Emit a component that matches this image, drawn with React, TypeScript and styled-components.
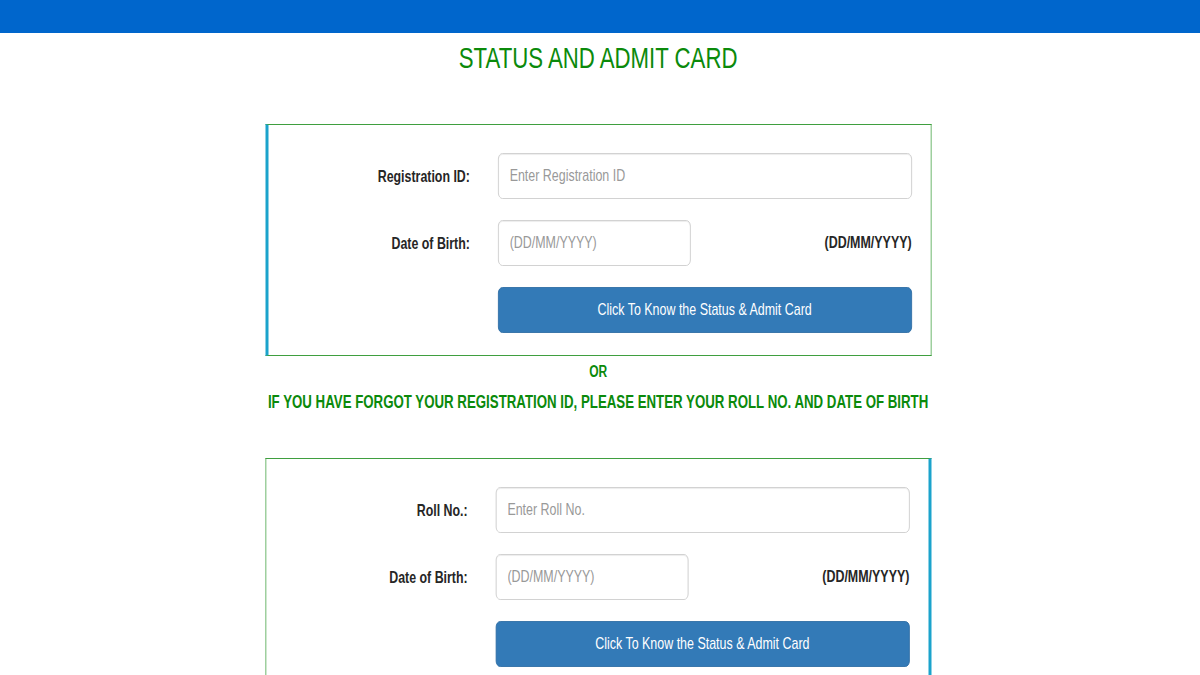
import React from "react";
import styled, { createGlobalStyle } from "styled-components";

const GlobalStyle = createGlobalStyle`
  html, body {
    margin: 0;
    padding: 0;
    overflow: hidden;
    background: #ffffff;
  }
  body {
    font-family: "Liberation Sans", Arial, sans-serif;
    color: #333333;
  }
  * {
    box-sizing: border-box;
  }
`;

const TopBar = styled.header`
  height: 33px;
  background: #0066cc;
`;

// the capture is squeezed horizontally, so the page is laid out wide and condensed
const Page = styled.main`
  width: 1595px;
  transform: scaleX(0.75);
  transform-origin: 0 0;
  display: flex;
  flex-direction: column;
  align-items: center;
`;

const Title = styled.h2`
  margin: 9px 0 50px;
  font-size: 29.6px;
  line-height: 32px;
  font-weight: normal;
  color: #0b8a0b;
`;

interface IPanelProps {
  $accent: "left" | "right";
}

const Panel = styled.section<IPanelProps>`
  width: 888px;
  border: 1px solid #3f9f3f;
  border-${({ $accent }) => $accent}: 4px solid #1ba3cc;
  padding: 28px 25px 22px 0;
  display: grid;
  grid-template-columns: 268px 552px;
  justify-content: end;
  column-gap: 37px;
  row-gap: 21px;
  align-items: center;
`;

const Label = styled.label`
  text-align: right;
  font-size: 16.5px;
  font-weight: bold;
  color: #262626;
`;

interface IInputProps {
  $width?: string;
}

const Input = styled.input<IInputProps>`
  width: ${({ $width = "100%" }) => $width};
  height: 46px;
  padding: 10px 15px;
  font-family: inherit;
  font-size: 16.6px;
  color: #555555;
  background: #ffffff;
  border: 1px solid #cccccc;
  border-radius: 6px;
  box-shadow: inset 0 1px 1px rgba(0, 0, 0, 0.075);
  outline: none;

  &::placeholder {
    color: #999999;
  }
`;

const DateCell = styled.div`
  display: flex;
  align-items: center;
  justify-content: space-between;
`;

const Hint = styled.span`
  font-size: 16.6px;
  font-weight: bold;
  color: #262626;
`;

const SubmitButton = styled.button`
  grid-column: 2;
  height: 46px;
  font-family: inherit;
  font-size: 16.6px;
  color: #ffffff;
  background: #337ab7;
  border: 1px solid #2e6da4;
  border-radius: 6px;
  cursor: pointer;
`;

const Or = styled.p`
  margin: 6px 0 0;
  font-size: 16px;
  line-height: 20px;
  font-weight: bold;
  color: #0b8a0b;
`;

const Note = styled.p`
  margin: 9px 0 45px;
  font-size: 17.7px;
  line-height: 22px;
  font-weight: bold;
  white-space: nowrap;
  color: #0b8a0b;
`;

interface IStatusFormProps {
  accent: "left" | "right";
  label: string;
  placeholder: string;
}

const StatusForm = ({ accent, label, placeholder }: IStatusFormProps) => {
  return (
    <Panel $accent={accent}>
      <Label>{label}</Label>
      <Input type="text" placeholder={placeholder} />
      <Label>Date of Birth:</Label>
      <DateCell>
        <Input type="text" placeholder="(DD/MM/YYYY)" $width="257px" />
        <Hint>(DD/MM/YYYY)</Hint>
      </DateCell>
      <SubmitButton type="button">Click To Know the Status &amp; Admit Card</SubmitButton>
    </Panel>
  );
};

export default function App() {
  return (
    <>
      <GlobalStyle />
      <TopBar />
      <Page>
        <Title>STATUS AND ADMIT CARD</Title>
        <StatusForm accent="left" label="Registration ID:" placeholder="Enter Registration ID" />
        <Or>OR</Or>
        <Note>IF YOU HAVE FORGOT YOUR REGISTRATION ID, PLEASE ENTER YOUR ROLL NO. AND DATE OF BIRTH</Note>
        <StatusForm accent="right" label="Roll No.:" placeholder="Enter Roll No." />
      </Page>
    </>
  );
}
